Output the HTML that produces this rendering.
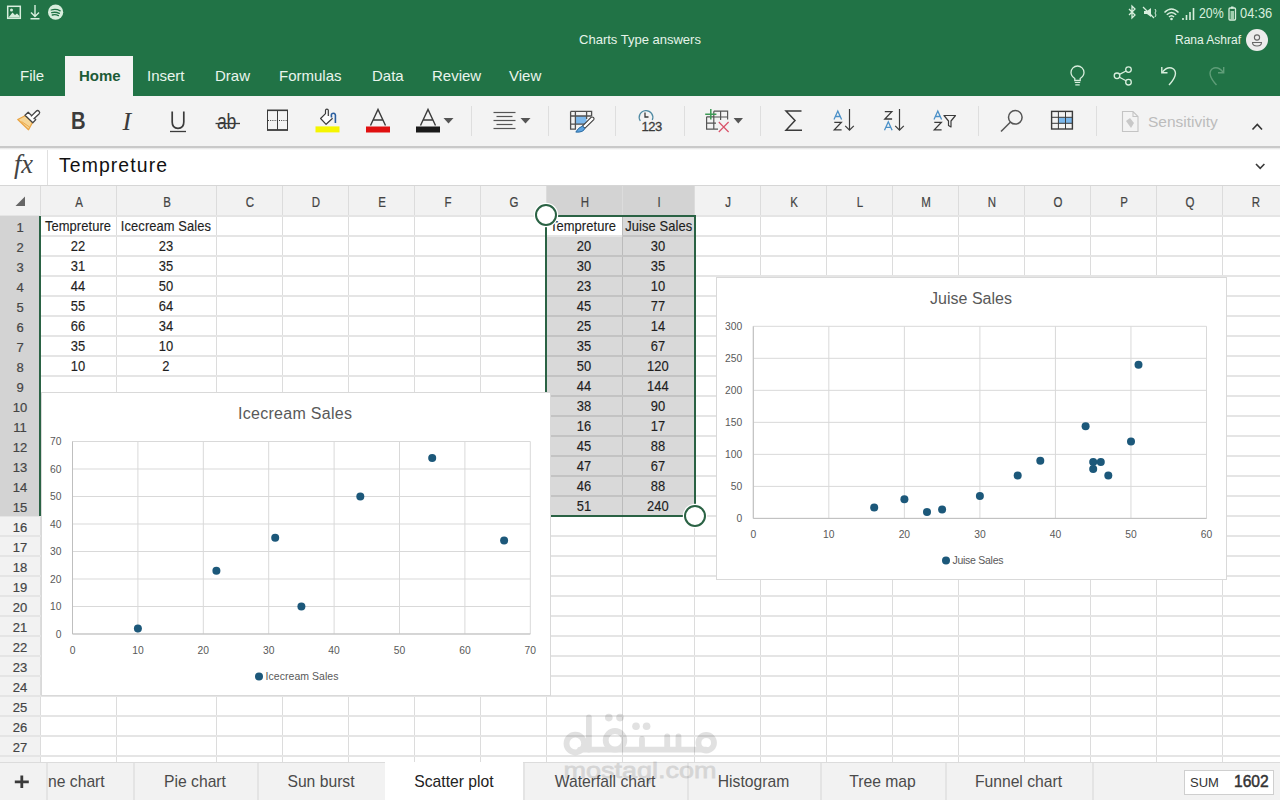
<!DOCTYPE html><html><head><meta charset="utf-8"><style>
*{margin:0;padding:0;box-sizing:border-box}
html,body{width:1280px;height:800px;overflow:hidden;background:#fff;font-family:"Liberation Sans", sans-serif}
.a{position:absolute}
.t{position:absolute;white-space:nowrap;line-height:1}
</style></head><body>
<div class="a" style="left:0;top:0;width:1280px;height:96px;background:#217346"></div>
<div class="t" style="left:0;width:1280px;text-align:center;top:33px;font-size:13px;color:#e6f4ea">Charts Type answers</div>
<div class="t" style="left:1175px;top:34px;font-size:12px;color:#e6f4ea">Rana Ashraf</div>
<div class="a" style="left:1246px;top:29px;width:22px;height:22px;border-radius:50%;background:#ececec"></div>
<svg class="a" style="left:1246px;top:29px" width="22" height="22" viewBox="0 0 22 22"><circle cx="11" cy="8.5" r="2.6" fill="none" stroke="#666" stroke-width="1.1"/><path d="M6.5 13.5 H15.5 Q15.5 17 11 17 Q6.5 17 6.5 13.5 Z" fill="none" stroke="#666" stroke-width="1.1"/></svg>
<svg class="a" style="left:0;top:0" width="70" height="24" viewBox="0 0 70 24"><rect x="7.7" y="6.3" width="12.6" height="12" fill="none" stroke="#d8eedd" stroke-width="1.5"/><path d="M8.5 17.5 L12.5 12.5 L15 15 L17 13.5 L19.5 16 V17.5 Z" fill="#d8eedd"/><circle cx="11.5" cy="10" r="1.5" fill="#d8eedd"/><path d="M35 5 V16.5 M31 12.5 L35 16.5 L39 12.5 M30.5 18.8 H39.5" fill="none" stroke="#d8eedd" stroke-width="1.4"/><circle cx="55.6" cy="12.2" r="7.6" fill="#d8eedd"/><path d="M51.2 10 Q56 8.6 60.2 10.8 M51.7 12.6 Q55.7 11.6 59.3 13.4 M52.3 15 Q55.7 14.2 58.4 15.6" fill="none" stroke="#217346" stroke-width="1.3" stroke-linecap="round"/></svg>
<div class="t" style="left:1199px;top:6px;font-size:14px;color:#d8eedd;transform:scaleX(0.88);transform-origin:0 0">20%</div>
<div class="t" style="left:1240px;top:6px;font-size:14px;color:#d8eedd;transform:scaleX(0.92);transform-origin:0 0">04:36</div>
<svg class="a" style="left:1125px;top:4px" width="112" height="18" viewBox="0 0 112 18"><path d="M4 5 L10 11 L7 14 V2 L10 5 L4 11" fill="none" stroke="#d8eedd" stroke-width="1.3"/><path d="M19 7 H22 L26 4 V13 L22 10 H19 Z" fill="#d8eedd"/><path d="M18 3 L29 14" stroke="#d8eedd" stroke-width="1.3"/><path d="M30 5 L31 7 L30 9 L31 11 L30 13" fill="none" stroke="#d8eedd" stroke-width="1"/><path d="M39.5 8.5 Q46.5 1.5 53.5 8.5 M41.8 10.8 Q46.5 6 51.2 10.8 M44 13 Q46.5 10.5 49 13" fill="none" stroke="#d8eedd" stroke-width="1.5"/><circle cx="46.5" cy="15" r="1.3" fill="#d8eedd"/><path d="M58 14 V16 M61.5 11 V16 M65 8 V16 M68.5 4 V16" stroke="#d8eedd" stroke-width="1.6"/><rect x="104" y="4" width="6.5" height="12" rx="1" fill="none" stroke="#d8eedd" stroke-width="1.3"/><rect x="106" y="2.5" width="2.5" height="2" fill="#d8eedd"/><rect x="105.5" y="7" width="3.5" height="8" fill="#9fcfae"/></svg>
<div class="a" style="left:65px;top:56px;width:68px;height:41px;background:#f3f3f3"></div>
<div class="t" style="left:20px;top:68px;font-size:15px;color:#eaf5ed">File</div>
<div class="t" style="left:79px;top:68px;font-size:15px;color:#1d5b37;font-weight:bold">Home</div>
<div class="t" style="left:147px;top:68px;font-size:15px;color:#eaf5ed">Insert</div>
<div class="t" style="left:215px;top:68px;font-size:15px;color:#eaf5ed">Draw</div>
<div class="t" style="left:279px;top:68px;font-size:15px;color:#eaf5ed">Formulas</div>
<div class="t" style="left:372px;top:68px;font-size:15px;color:#eaf5ed">Data</div>
<div class="t" style="left:432px;top:68px;font-size:15px;color:#eaf5ed">Review</div>
<div class="t" style="left:509px;top:68px;font-size:15px;color:#eaf5ed">View</div>
<svg class="a" style="left:1060px;top:60px" width="180" height="32" viewBox="0 0 180 32"><path d="M14.8 20.5 V18.5 Q11 16 11 12.5 A6.5 6.5 0 0 1 24 12.5 Q24 16 20.2 18.5 V20.5 Z" fill="none" stroke="#d8eedd" stroke-width="1.3"/><path d="M14.8 22.5 H20.2 M15.3 24.8 H19.7" stroke="#d8eedd" stroke-width="1.2"/><circle cx="57" cy="15.8" r="2.8" fill="none" stroke="#d8eedd" stroke-width="1.3"/><circle cx="68.5" cy="9.6" r="2.8" fill="none" stroke="#d8eedd" stroke-width="1.3"/><circle cx="68.5" cy="22.2" r="2.8" fill="none" stroke="#d8eedd" stroke-width="1.3"/><path d="M59.5 14.4 L66 11 M59.5 17.2 L66 20.8" stroke="#d8eedd" stroke-width="1.3"/><path d="M102.5 12 Q108 5.5 113.5 9 Q119 14 109 25" fill="none" stroke="#d8eedd" stroke-width="1.4"/><path d="M101.8 7 V12.8 H107.5" fill="none" stroke="#d8eedd" stroke-width="1.4"/><path d="M163 12 Q157.5 5.5 152 9 Q146.5 14 156.5 25" fill="none" stroke="#5f9d78" stroke-width="1.4"/><path d="M163.7 7 V12.8 H158" fill="none" stroke="#5f9d78" stroke-width="1.4"/></svg>
<div class="a" style="left:0;top:96px;width:1280px;height:50px;background:#f3f3f3"></div>
<svg class="a" style="left:0;top:96px" width="1280" height="51" viewBox="0 96 1280 51"><path d="M17.8 119.5 L25.5 115.5 L32.5 122.5 L28.5 129.8 Z" fill="#f6d595" stroke="#eaa443" stroke-width="1.3" stroke-linejoin="round"/><path d="M21.5 121.5 L29.5 127" stroke="#eaa443" stroke-width="0.9"/><path d="M25 115.2 L28.2 112.2 L35.8 119.6 L32.8 122.8 Z" fill="#fff" stroke="#444" stroke-width="1.3" stroke-linejoin="round"/><path d="M31 116.4 L36.2 111.2 Q37.6 109.8 39 111.2 Q40.4 112.6 39 114 L33.6 119" fill="#fff" stroke="#444" stroke-width="1.3" stroke-linejoin="round"/><line x1="471.5" y1="106" x2="471.5" y2="136" stroke="#dedede" stroke-width="1"/><line x1="548.5" y1="106" x2="548.5" y2="136" stroke="#dedede" stroke-width="1"/><line x1="615.5" y1="106" x2="615.5" y2="136" stroke="#dedede" stroke-width="1"/><line x1="684.5" y1="106" x2="684.5" y2="136" stroke="#dedede" stroke-width="1"/><line x1="760.5" y1="106" x2="760.5" y2="136" stroke="#dedede" stroke-width="1"/><line x1="978.5" y1="106" x2="978.5" y2="136" stroke="#dedede" stroke-width="1"/><line x1="1096.5" y1="106" x2="1096.5" y2="136" stroke="#dedede" stroke-width="1"/><text x="71" y="129.5" transform="translate(71 0) scale(0.86 1) translate(-71 0)" font-size="23.5" font-weight="bold" fill="#3b3b3b" font-family="Liberation Sans">B</text><text x="122.5" y="129.5" font-size="26" font-style="italic" fill="#3b3b3b" font-family="Liberation Serif">I</text><path d="M172.2 111.5 V122 Q172.2 128.3 178 128.3 Q183.8 128.3 183.8 122 V111.5" fill="none" stroke="#3b3b3b" stroke-width="1.7"/><line x1="170" y1="131.5" x2="186" y2="131.5" stroke="#3b3b3b" stroke-width="1.3"/><text x="217" y="129" transform="translate(217 0) scale(0.8 1) translate(-217 0)" font-size="22" fill="#3b3b3b" font-family="Liberation Sans" letter-spacing="-0.3">ab</text><line x1="215.5" y1="123.5" x2="240" y2="123.5" stroke="#3b3b3b" stroke-width="1.3"/><rect x="267.5" y="110.5" width="20" height="19.5" fill="none" stroke="#3b3b3b" stroke-width="1"/><line x1="267" y1="110.3" x2="288" y2="110.3" stroke="#3b3b3b" stroke-width="1.6"/><line x1="267" y1="130" x2="288" y2="130" stroke="#3b3b3b" stroke-width="1.6"/><line x1="277.5" y1="110" x2="277.5" y2="130" stroke="#3b3b3b" stroke-width="1"/><line x1="268" y1="120.5" x2="287" y2="120.5" stroke="#3b3b3b" stroke-width="1" stroke-dasharray="1 1.2"/><path d="M328.3 116 V110.6 Q328.3 109.2 326.9 109.2 Q325.5 109.2 325.5 110.6 V113.6 L320.6 118.5 L326.1 124.3 L332.6 118.2" fill="#fff" stroke="#3b3b3b" stroke-width="1.2" stroke-linejoin="round"/><path d="M331.6 117.5 Q330.6 113.2 333.2 113.2 Q335.9 113.2 335.4 117 V123" fill="none" stroke="#2a5ea0" stroke-width="1.6"/><rect x="315.5" y="126.4" width="24" height="6" fill="#f5f500"/><path d="M370.5 125.5 L378 109.5 L385.5 125.5 M373 120 H383" fill="none" stroke="#3b3b3b" stroke-width="1.4"/><rect x="366" y="126.5" width="24" height="6" fill="#e01010"/><path d="M420.5 125.5 L428 109.5 L435.5 125.5 M423 120 H433" fill="none" stroke="#3b3b3b" stroke-width="1.4"/><rect x="416" y="126.5" width="24" height="6" fill="#1a1a1a"/><path d="M443.5 118 H453.5 L448.5 123.5 Z" fill="#555"/><line x1="493.5" y1="112.5" x2="515.5" y2="112.5" stroke="#555" stroke-width="1.2"/><line x1="496.5" y1="116.5" x2="512.5" y2="116.5" stroke="#555" stroke-width="1.2"/><line x1="493.5" y1="120.5" x2="515.5" y2="120.5" stroke="#555" stroke-width="1.2"/><line x1="496.5" y1="124.5" x2="512.5" y2="124.5" stroke="#555" stroke-width="1.2"/><line x1="493.5" y1="128.5" x2="515.5" y2="128.5" stroke="#555" stroke-width="1.2"/><path d="M520.5 118 H530.5 L525.5 123.5 Z" fill="#555"/><rect x="575.4" y="116" width="11.2" height="8.2" fill="#7cb8ec"/><path d="M570.6 111.4 H591.6 V116 M570.6 111.4 V129.2 H576 M570.6 116 H591.6 M575.4 111.4 V129.2 M586.6 111.4 V119 M570.6 124.2 H585" fill="none" stroke="#505050" stroke-width="1.3"/><path d="M591.3 117.2 Q592.6 116.6 593.6 117.6 Q594.4 118.6 593.8 119.6 L584.8 128.4 L582.4 126.1 Z" fill="#fff" stroke="#3d3d3d" stroke-width="1.1" stroke-linejoin="round"/><path d="M582.4 126.1 L584.8 128.4 Q583.5 132.6 575.8 132.1 Q578.2 127.6 582.4 126.1 Z" fill="#5da3e0" stroke="#2a6aa0" stroke-width="1"/><path d="M640.3 121 A6.8 6.8 0 1 1 652.3 120" fill="none" stroke="#4f8aa3" stroke-width="1.3"/><path d="M645 112.5 V117 H648.5" fill="none" stroke="#3b3b3b" stroke-width="1.3"/><text x="641.5" y="131.2" font-size="13" fill="#3b3b3b" stroke="#3b3b3b" stroke-width="0.3" font-family="Liberation Sans" letter-spacing="-0.5">123</text><path d="M713.8 111.2 H727.6 V119.6 M720.6 111.2 V120 M713.8 117 H727 M706.6 116.8 V129.2 H718 M713.8 111.2 V129.2 M706.6 123.2 H716 M706.6 116.9 H713.8" fill="none" stroke="#555" stroke-width="1.2"/><path d="M705.2 114.2 H716.4 M710.8 109 V119.6" stroke="#3c9a55" stroke-width="1.5"/><path d="M718.8 122 L728.6 132 M728.6 122 L718.8 132" stroke="#d9536a" stroke-width="1.2"/><path d="M733.6 118 H743 L738.3 123.5 Z" fill="#555"/><path d="M801.5 111 H786 L795 120.5 L786 130.2 H802" fill="none" stroke="#3b3b3b" stroke-width="1.5" stroke-linejoin="miter"/><path d="M834 119.5 L837.8 111 L841.6 119.5 M835.4 116.5 H840.2" fill="none" stroke="#4a90c8" stroke-width="1.3"/><path d="M834.3 122.39999999999999 H841.3 L834.3 129.8 H841.6" fill="none" stroke="#3b3b3b" stroke-width="1.3"/><path d="M849.5 109 V130 M845.2 125.8 L849.5 130.2 L853.8 125.8" fill="none" stroke="#3b3b3b" stroke-width="1.2"/><path d="M884.8 111.6 H891.8 L884.8 119 H892.1" fill="none" stroke="#3b3b3b" stroke-width="1.3"/><path d="M884.5 130.3 L888.3 121.8 L892.1 130.3 M885.9 127.3 H890.7" fill="none" stroke="#4a90c8" stroke-width="1.3"/><path d="M899.5 109 V130 M895.2 125.8 L899.5 130.2 L903.8 125.8" fill="none" stroke="#3b3b3b" stroke-width="1.2"/><path d="M934 119.5 L937.8 111 L941.6 119.5 M935.4 116.5 H940.2" fill="none" stroke="#4a90c8" stroke-width="1.3"/><path d="M934.3 122.39999999999999 H941.3 L934.3 129.8 H941.6" fill="none" stroke="#3b3b3b" stroke-width="1.3"/><path d="M944 115.5 H955.5 L951 121 V127 L948.5 125.5 V121 Z" fill="none" stroke="#3b3b3b" stroke-width="1.2" stroke-linejoin="round"/><circle cx="1015.3" cy="117.3" r="6.8" fill="none" stroke="#555" stroke-width="1.5"/><line x1="1010.3" y1="122.3" x2="1001" y2="131.5" stroke="#555" stroke-width="1.5"/><rect x="1058.4" y="117.3" width="13.6" height="6" fill="#7cb8ec"/><rect x="1051.6" y="111.4" width="20.8" height="17.6" fill="none" stroke="#3b3b3b" stroke-width="1.4"/><path d="M1058.4 111.4 V129 M1065.5 111.4 V129 M1051.6 117.3 H1072.4 M1051.6 123.3 H1072.4" fill="none" stroke="#3b3b3b" stroke-width="1"/><path d="M1122.5 111.5 H1133 L1138 116.5 V131.5 H1122.5 Z M1133 111.5 V116.5 H1138" fill="none" stroke="#c4c4c4" stroke-width="1.1"/><path d="M1126 121 L1130 118 L1134 123 L1131 128 Z" fill="#c8c8c8"/><text x="1148" y="127" font-size="15.5" fill="#bcbcbc" font-family="Liberation Sans">Sensitivity</text><path d="M1252.5 129.5 L1257.3 124.5 L1262 129.5" fill="none" stroke="#333" stroke-width="1.6"/></svg>
<div class="a" style="left:0;top:148px;width:1280px;height:38px;background:#fff;border-bottom:1px solid #d6d6d6"></div>
<div class="a" style="left:47px;top:148px;width:1px;height:37px;background:#e0e0e0"></div>
<div class="a" style="left:0;top:146px;width:1280px;height:2px;background:#c9c9c9"></div>
<div class="a" style="left:0;top:148px;width:1280px;height:2px;background:linear-gradient(#e2e2e2,#fff)"></div>
<div class="t" style="left:14px;top:151px;font-size:26.5px;font-family:'Liberation Serif',serif;font-style:italic;color:#444">fx</div>
<div class="t" style="left:59px;top:156px;font-size:19.4px;letter-spacing:1.1px;color:#111">Tempreture</div>
<svg class="a" style="left:1252px;top:160px" width="14" height="12" viewBox="0 0 14 12"><path d="M4 4 L8.2 8.3 L12.4 4" fill="none" stroke="#3a3a3a" stroke-width="1.6"/></svg>
<div class="a" style="left:0;top:186px;width:1280px;height:30px;background:#f2f2f2"></div>
<div class="a" style="left:546px;top:186px;width:149px;height:30px;background:#d3d3d3"></div>
<svg class="a" style="left:13px;top:194px" width="14" height="14" viewBox="0 0 14 14"><path d="M2.5 12 L12 2.5 V12 Z" fill="#666"/></svg>
<div class="a" style="left:0;top:216px;width:40px;height:546px;background:#f2f2f2"></div>
<svg class="a" style="left:0;top:186px" width="1280" height="576" viewBox="0 186 1280 576" shape-rendering="crispEdges"><rect x="40" y="186" width="1" height="576" fill="#dcdcdc"/><rect x="116" y="186" width="1" height="576" fill="#dcdcdc"/><rect x="216" y="186" width="1" height="576" fill="#dcdcdc"/><rect x="282" y="186" width="1" height="576" fill="#dcdcdc"/><rect x="348" y="186" width="1" height="576" fill="#dcdcdc"/><rect x="414" y="186" width="1" height="576" fill="#dcdcdc"/><rect x="480" y="186" width="1" height="576" fill="#dcdcdc"/><rect x="546" y="186" width="1" height="576" fill="#dcdcdc"/><rect x="622" y="186" width="1" height="576" fill="#dcdcdc"/><rect x="694" y="186" width="1" height="576" fill="#dcdcdc"/><rect x="760" y="186" width="1" height="576" fill="#dcdcdc"/><rect x="826" y="186" width="1" height="576" fill="#dcdcdc"/><rect x="892" y="186" width="1" height="576" fill="#dcdcdc"/><rect x="958" y="186" width="1" height="576" fill="#dcdcdc"/><rect x="1024" y="186" width="1" height="576" fill="#dcdcdc"/><rect x="1090" y="186" width="1" height="576" fill="#dcdcdc"/><rect x="1156" y="186" width="1" height="576" fill="#dcdcdc"/><rect x="1222" y="186" width="1" height="576" fill="#dcdcdc"/><rect x="1288" y="186" width="1" height="576" fill="#dcdcdc"/><rect x="0" y="215" width="1280" height="2" fill="#e5e5e5"/><rect x="0" y="235" width="1280" height="2" fill="#e5e5e5"/><rect x="0" y="255" width="1280" height="2" fill="#e5e5e5"/><rect x="0" y="275" width="1280" height="2" fill="#e5e5e5"/><rect x="0" y="295" width="1280" height="2" fill="#e5e5e5"/><rect x="0" y="315" width="1280" height="2" fill="#e5e5e5"/><rect x="0" y="335" width="1280" height="2" fill="#e5e5e5"/><rect x="0" y="355" width="1280" height="2" fill="#e5e5e5"/><rect x="0" y="375" width="1280" height="2" fill="#e5e5e5"/><rect x="0" y="395" width="1280" height="2" fill="#e5e5e5"/><rect x="0" y="415" width="1280" height="2" fill="#e5e5e5"/><rect x="0" y="435" width="1280" height="2" fill="#e5e5e5"/><rect x="0" y="455" width="1280" height="2" fill="#e5e5e5"/><rect x="0" y="475" width="1280" height="2" fill="#e5e5e5"/><rect x="0" y="495" width="1280" height="2" fill="#e5e5e5"/><rect x="0" y="515" width="1280" height="2" fill="#e5e5e5"/><rect x="0" y="535" width="1280" height="2" fill="#e5e5e5"/><rect x="0" y="555" width="1280" height="2" fill="#e5e5e5"/><rect x="0" y="575" width="1280" height="2" fill="#e5e5e5"/><rect x="0" y="595" width="1280" height="2" fill="#e5e5e5"/><rect x="0" y="615" width="1280" height="2" fill="#e5e5e5"/><rect x="0" y="635" width="1280" height="2" fill="#e5e5e5"/><rect x="0" y="655" width="1280" height="2" fill="#e5e5e5"/><rect x="0" y="675" width="1280" height="2" fill="#e5e5e5"/><rect x="0" y="695" width="1280" height="2" fill="#e5e5e5"/><rect x="0" y="715" width="1280" height="2" fill="#e5e5e5"/><rect x="0" y="735" width="1280" height="2" fill="#e5e5e5"/><rect x="0" y="755" width="1280" height="2" fill="#e5e5e5"/><rect x="0" y="775" width="1280" height="2" fill="#e5e5e5"/><rect x="546" y="237" width="149" height="279" fill="#000" fill-opacity="0.15"/><rect x="622" y="216" width="73" height="21" fill="#000" fill-opacity="0.15"/><rect x="0" y="216" width="39" height="300" fill="#d3d3d3"/></svg>
<div class="t" style="left:58.5px;width:40px;text-align:center;top:195px;font-size:14px;color:#444;-webkit-text-stroke:0.2px #444;transform:scaleX(0.82)">A</div>
<div class="t" style="left:146.5px;width:40px;text-align:center;top:195px;font-size:14px;color:#444;-webkit-text-stroke:0.2px #444;transform:scaleX(0.82)">B</div>
<div class="t" style="left:229.5px;width:40px;text-align:center;top:195px;font-size:14px;color:#444;-webkit-text-stroke:0.2px #444;transform:scaleX(0.82)">C</div>
<div class="t" style="left:295.5px;width:40px;text-align:center;top:195px;font-size:14px;color:#444;-webkit-text-stroke:0.2px #444;transform:scaleX(0.82)">D</div>
<div class="t" style="left:361.5px;width:40px;text-align:center;top:195px;font-size:14px;color:#444;-webkit-text-stroke:0.2px #444;transform:scaleX(0.82)">E</div>
<div class="t" style="left:427.5px;width:40px;text-align:center;top:195px;font-size:14px;color:#444;-webkit-text-stroke:0.2px #444;transform:scaleX(0.82)">F</div>
<div class="t" style="left:493.5px;width:40px;text-align:center;top:195px;font-size:14px;color:#444;-webkit-text-stroke:0.2px #444;transform:scaleX(0.82)">G</div>
<div class="t" style="left:564.5px;width:40px;text-align:center;top:195px;font-size:14px;color:#444;-webkit-text-stroke:0.2px #444;transform:scaleX(0.82)">H</div>
<div class="t" style="left:638.5px;width:40px;text-align:center;top:195px;font-size:14px;color:#444;-webkit-text-stroke:0.2px #444;transform:scaleX(0.82)">I</div>
<div class="t" style="left:707.5px;width:40px;text-align:center;top:195px;font-size:14px;color:#444;-webkit-text-stroke:0.2px #444;transform:scaleX(0.82)">J</div>
<div class="t" style="left:773.5px;width:40px;text-align:center;top:195px;font-size:14px;color:#444;-webkit-text-stroke:0.2px #444;transform:scaleX(0.82)">K</div>
<div class="t" style="left:839.5px;width:40px;text-align:center;top:195px;font-size:14px;color:#444;-webkit-text-stroke:0.2px #444;transform:scaleX(0.82)">L</div>
<div class="t" style="left:905.5px;width:40px;text-align:center;top:195px;font-size:14px;color:#444;-webkit-text-stroke:0.2px #444;transform:scaleX(0.82)">M</div>
<div class="t" style="left:971.5px;width:40px;text-align:center;top:195px;font-size:14px;color:#444;-webkit-text-stroke:0.2px #444;transform:scaleX(0.82)">N</div>
<div class="t" style="left:1037.5px;width:40px;text-align:center;top:195px;font-size:14px;color:#444;-webkit-text-stroke:0.2px #444;transform:scaleX(0.82)">O</div>
<div class="t" style="left:1103.5px;width:40px;text-align:center;top:195px;font-size:14px;color:#444;-webkit-text-stroke:0.2px #444;transform:scaleX(0.82)">P</div>
<div class="t" style="left:1169.5px;width:40px;text-align:center;top:195px;font-size:14px;color:#444;-webkit-text-stroke:0.2px #444;transform:scaleX(0.82)">Q</div>
<div class="t" style="left:1235.5px;width:40px;text-align:center;top:195px;font-size:14px;color:#444;-webkit-text-stroke:0.2px #444;transform:scaleX(0.82)">R</div>
<div class="t" style="left:0;width:40px;text-align:center;top:221px;font-size:13px;color:#444;-webkit-text-stroke:0.2px #444">1</div>
<div class="t" style="left:0;width:40px;text-align:center;top:241px;font-size:13px;color:#444;-webkit-text-stroke:0.2px #444">2</div>
<div class="t" style="left:0;width:40px;text-align:center;top:261px;font-size:13px;color:#444;-webkit-text-stroke:0.2px #444">3</div>
<div class="t" style="left:0;width:40px;text-align:center;top:281px;font-size:13px;color:#444;-webkit-text-stroke:0.2px #444">4</div>
<div class="t" style="left:0;width:40px;text-align:center;top:301px;font-size:13px;color:#444;-webkit-text-stroke:0.2px #444">5</div>
<div class="t" style="left:0;width:40px;text-align:center;top:321px;font-size:13px;color:#444;-webkit-text-stroke:0.2px #444">6</div>
<div class="t" style="left:0;width:40px;text-align:center;top:341px;font-size:13px;color:#444;-webkit-text-stroke:0.2px #444">7</div>
<div class="t" style="left:0;width:40px;text-align:center;top:361px;font-size:13px;color:#444;-webkit-text-stroke:0.2px #444">8</div>
<div class="t" style="left:0;width:40px;text-align:center;top:381px;font-size:13px;color:#444;-webkit-text-stroke:0.2px #444">9</div>
<div class="t" style="left:0;width:40px;text-align:center;top:401px;font-size:13px;color:#444;-webkit-text-stroke:0.2px #444">10</div>
<div class="t" style="left:0;width:40px;text-align:center;top:421px;font-size:13px;color:#444;-webkit-text-stroke:0.2px #444">11</div>
<div class="t" style="left:0;width:40px;text-align:center;top:441px;font-size:13px;color:#444;-webkit-text-stroke:0.2px #444">12</div>
<div class="t" style="left:0;width:40px;text-align:center;top:461px;font-size:13px;color:#444;-webkit-text-stroke:0.2px #444">13</div>
<div class="t" style="left:0;width:40px;text-align:center;top:481px;font-size:13px;color:#444;-webkit-text-stroke:0.2px #444">14</div>
<div class="t" style="left:0;width:40px;text-align:center;top:501px;font-size:13px;color:#444;-webkit-text-stroke:0.2px #444">15</div>
<div class="t" style="left:0;width:40px;text-align:center;top:521px;font-size:13px;color:#444;-webkit-text-stroke:0.2px #444">16</div>
<div class="t" style="left:0;width:40px;text-align:center;top:541px;font-size:13px;color:#444;-webkit-text-stroke:0.2px #444">17</div>
<div class="t" style="left:0;width:40px;text-align:center;top:561px;font-size:13px;color:#444;-webkit-text-stroke:0.2px #444">18</div>
<div class="t" style="left:0;width:40px;text-align:center;top:581px;font-size:13px;color:#444;-webkit-text-stroke:0.2px #444">19</div>
<div class="t" style="left:0;width:40px;text-align:center;top:601px;font-size:13px;color:#444;-webkit-text-stroke:0.2px #444">20</div>
<div class="t" style="left:0;width:40px;text-align:center;top:621px;font-size:13px;color:#444;-webkit-text-stroke:0.2px #444">21</div>
<div class="t" style="left:0;width:40px;text-align:center;top:641px;font-size:13px;color:#444;-webkit-text-stroke:0.2px #444">22</div>
<div class="t" style="left:0;width:40px;text-align:center;top:661px;font-size:13px;color:#444;-webkit-text-stroke:0.2px #444">23</div>
<div class="t" style="left:0;width:40px;text-align:center;top:681px;font-size:13px;color:#444;-webkit-text-stroke:0.2px #444">24</div>
<div class="t" style="left:0;width:40px;text-align:center;top:701px;font-size:13px;color:#444;-webkit-text-stroke:0.2px #444">25</div>
<div class="t" style="left:0;width:40px;text-align:center;top:721px;font-size:13px;color:#444;-webkit-text-stroke:0.2px #444">26</div>
<div class="t" style="left:0;width:40px;text-align:center;top:741px;font-size:13px;color:#444;-webkit-text-stroke:0.2px #444">27</div>
<div class="t" style="left:0;width:40px;text-align:center;top:761px;font-size:13px;color:#444;-webkit-text-stroke:0.2px #444">28</div>
<div class="t" style="left:40px;width:76px;text-align:center;top:219px;font-size:14.2px;letter-spacing:0.1px;color:#1e1e1e;-webkit-text-stroke:0.15px #1e1e1e;transform:scaleX(0.91)">Tempreture</div>
<div class="t" style="left:116px;width:100px;text-align:center;top:219px;font-size:14.2px;letter-spacing:0.1px;color:#1e1e1e;-webkit-text-stroke:0.15px #1e1e1e;transform:scaleX(0.91)">Icecream Sales</div>
<div class="t" style="left:40px;width:76px;text-align:center;top:239px;font-size:14.2px;letter-spacing:0.1px;color:#1e1e1e;-webkit-text-stroke:0.15px #1e1e1e;transform:scaleX(0.91)">22</div>
<div class="t" style="left:116px;width:100px;text-align:center;top:239px;font-size:14.2px;letter-spacing:0.1px;color:#1e1e1e;-webkit-text-stroke:0.15px #1e1e1e;transform:scaleX(0.91)">23</div>
<div class="t" style="left:40px;width:76px;text-align:center;top:259px;font-size:14.2px;letter-spacing:0.1px;color:#1e1e1e;-webkit-text-stroke:0.15px #1e1e1e;transform:scaleX(0.91)">31</div>
<div class="t" style="left:116px;width:100px;text-align:center;top:259px;font-size:14.2px;letter-spacing:0.1px;color:#1e1e1e;-webkit-text-stroke:0.15px #1e1e1e;transform:scaleX(0.91)">35</div>
<div class="t" style="left:40px;width:76px;text-align:center;top:279px;font-size:14.2px;letter-spacing:0.1px;color:#1e1e1e;-webkit-text-stroke:0.15px #1e1e1e;transform:scaleX(0.91)">44</div>
<div class="t" style="left:116px;width:100px;text-align:center;top:279px;font-size:14.2px;letter-spacing:0.1px;color:#1e1e1e;-webkit-text-stroke:0.15px #1e1e1e;transform:scaleX(0.91)">50</div>
<div class="t" style="left:40px;width:76px;text-align:center;top:299px;font-size:14.2px;letter-spacing:0.1px;color:#1e1e1e;-webkit-text-stroke:0.15px #1e1e1e;transform:scaleX(0.91)">55</div>
<div class="t" style="left:116px;width:100px;text-align:center;top:299px;font-size:14.2px;letter-spacing:0.1px;color:#1e1e1e;-webkit-text-stroke:0.15px #1e1e1e;transform:scaleX(0.91)">64</div>
<div class="t" style="left:40px;width:76px;text-align:center;top:319px;font-size:14.2px;letter-spacing:0.1px;color:#1e1e1e;-webkit-text-stroke:0.15px #1e1e1e;transform:scaleX(0.91)">66</div>
<div class="t" style="left:116px;width:100px;text-align:center;top:319px;font-size:14.2px;letter-spacing:0.1px;color:#1e1e1e;-webkit-text-stroke:0.15px #1e1e1e;transform:scaleX(0.91)">34</div>
<div class="t" style="left:40px;width:76px;text-align:center;top:339px;font-size:14.2px;letter-spacing:0.1px;color:#1e1e1e;-webkit-text-stroke:0.15px #1e1e1e;transform:scaleX(0.91)">35</div>
<div class="t" style="left:116px;width:100px;text-align:center;top:339px;font-size:14.2px;letter-spacing:0.1px;color:#1e1e1e;-webkit-text-stroke:0.15px #1e1e1e;transform:scaleX(0.91)">10</div>
<div class="t" style="left:40px;width:76px;text-align:center;top:359px;font-size:14.2px;letter-spacing:0.1px;color:#1e1e1e;-webkit-text-stroke:0.15px #1e1e1e;transform:scaleX(0.91)">10</div>
<div class="t" style="left:116px;width:100px;text-align:center;top:359px;font-size:14.2px;letter-spacing:0.1px;color:#1e1e1e;-webkit-text-stroke:0.15px #1e1e1e;transform:scaleX(0.91)">2</div>
<div class="t" style="left:545px;width:76px;text-align:center;top:219px;font-size:14.2px;letter-spacing:0.1px;color:#1e1e1e;-webkit-text-stroke:0.15px #1e1e1e;transform:scaleX(0.91)">Tempreture</div>
<div class="t" style="left:622px;width:72px;text-align:center;top:219px;font-size:14.2px;letter-spacing:0.1px;color:#1e1e1e;-webkit-text-stroke:0.15px #1e1e1e;transform:scaleX(0.91)">Juise Sales</div>
<div class="t" style="left:546px;width:76px;text-align:center;top:239px;font-size:14.2px;letter-spacing:0.1px;color:#1e1e1e;-webkit-text-stroke:0.15px #1e1e1e;transform:scaleX(0.91)">20</div>
<div class="t" style="left:622px;width:72px;text-align:center;top:239px;font-size:14.2px;letter-spacing:0.1px;color:#1e1e1e;-webkit-text-stroke:0.15px #1e1e1e;transform:scaleX(0.91)">30</div>
<div class="t" style="left:546px;width:76px;text-align:center;top:259px;font-size:14.2px;letter-spacing:0.1px;color:#1e1e1e;-webkit-text-stroke:0.15px #1e1e1e;transform:scaleX(0.91)">30</div>
<div class="t" style="left:622px;width:72px;text-align:center;top:259px;font-size:14.2px;letter-spacing:0.1px;color:#1e1e1e;-webkit-text-stroke:0.15px #1e1e1e;transform:scaleX(0.91)">35</div>
<div class="t" style="left:546px;width:76px;text-align:center;top:279px;font-size:14.2px;letter-spacing:0.1px;color:#1e1e1e;-webkit-text-stroke:0.15px #1e1e1e;transform:scaleX(0.91)">23</div>
<div class="t" style="left:622px;width:72px;text-align:center;top:279px;font-size:14.2px;letter-spacing:0.1px;color:#1e1e1e;-webkit-text-stroke:0.15px #1e1e1e;transform:scaleX(0.91)">10</div>
<div class="t" style="left:546px;width:76px;text-align:center;top:299px;font-size:14.2px;letter-spacing:0.1px;color:#1e1e1e;-webkit-text-stroke:0.15px #1e1e1e;transform:scaleX(0.91)">45</div>
<div class="t" style="left:622px;width:72px;text-align:center;top:299px;font-size:14.2px;letter-spacing:0.1px;color:#1e1e1e;-webkit-text-stroke:0.15px #1e1e1e;transform:scaleX(0.91)">77</div>
<div class="t" style="left:546px;width:76px;text-align:center;top:319px;font-size:14.2px;letter-spacing:0.1px;color:#1e1e1e;-webkit-text-stroke:0.15px #1e1e1e;transform:scaleX(0.91)">25</div>
<div class="t" style="left:622px;width:72px;text-align:center;top:319px;font-size:14.2px;letter-spacing:0.1px;color:#1e1e1e;-webkit-text-stroke:0.15px #1e1e1e;transform:scaleX(0.91)">14</div>
<div class="t" style="left:546px;width:76px;text-align:center;top:339px;font-size:14.2px;letter-spacing:0.1px;color:#1e1e1e;-webkit-text-stroke:0.15px #1e1e1e;transform:scaleX(0.91)">35</div>
<div class="t" style="left:622px;width:72px;text-align:center;top:339px;font-size:14.2px;letter-spacing:0.1px;color:#1e1e1e;-webkit-text-stroke:0.15px #1e1e1e;transform:scaleX(0.91)">67</div>
<div class="t" style="left:546px;width:76px;text-align:center;top:359px;font-size:14.2px;letter-spacing:0.1px;color:#1e1e1e;-webkit-text-stroke:0.15px #1e1e1e;transform:scaleX(0.91)">50</div>
<div class="t" style="left:622px;width:72px;text-align:center;top:359px;font-size:14.2px;letter-spacing:0.1px;color:#1e1e1e;-webkit-text-stroke:0.15px #1e1e1e;transform:scaleX(0.91)">120</div>
<div class="t" style="left:546px;width:76px;text-align:center;top:379px;font-size:14.2px;letter-spacing:0.1px;color:#1e1e1e;-webkit-text-stroke:0.15px #1e1e1e;transform:scaleX(0.91)">44</div>
<div class="t" style="left:622px;width:72px;text-align:center;top:379px;font-size:14.2px;letter-spacing:0.1px;color:#1e1e1e;-webkit-text-stroke:0.15px #1e1e1e;transform:scaleX(0.91)">144</div>
<div class="t" style="left:546px;width:76px;text-align:center;top:399px;font-size:14.2px;letter-spacing:0.1px;color:#1e1e1e;-webkit-text-stroke:0.15px #1e1e1e;transform:scaleX(0.91)">38</div>
<div class="t" style="left:622px;width:72px;text-align:center;top:399px;font-size:14.2px;letter-spacing:0.1px;color:#1e1e1e;-webkit-text-stroke:0.15px #1e1e1e;transform:scaleX(0.91)">90</div>
<div class="t" style="left:546px;width:76px;text-align:center;top:419px;font-size:14.2px;letter-spacing:0.1px;color:#1e1e1e;-webkit-text-stroke:0.15px #1e1e1e;transform:scaleX(0.91)">16</div>
<div class="t" style="left:622px;width:72px;text-align:center;top:419px;font-size:14.2px;letter-spacing:0.1px;color:#1e1e1e;-webkit-text-stroke:0.15px #1e1e1e;transform:scaleX(0.91)">17</div>
<div class="t" style="left:546px;width:76px;text-align:center;top:439px;font-size:14.2px;letter-spacing:0.1px;color:#1e1e1e;-webkit-text-stroke:0.15px #1e1e1e;transform:scaleX(0.91)">45</div>
<div class="t" style="left:622px;width:72px;text-align:center;top:439px;font-size:14.2px;letter-spacing:0.1px;color:#1e1e1e;-webkit-text-stroke:0.15px #1e1e1e;transform:scaleX(0.91)">88</div>
<div class="t" style="left:546px;width:76px;text-align:center;top:459px;font-size:14.2px;letter-spacing:0.1px;color:#1e1e1e;-webkit-text-stroke:0.15px #1e1e1e;transform:scaleX(0.91)">47</div>
<div class="t" style="left:622px;width:72px;text-align:center;top:459px;font-size:14.2px;letter-spacing:0.1px;color:#1e1e1e;-webkit-text-stroke:0.15px #1e1e1e;transform:scaleX(0.91)">67</div>
<div class="t" style="left:546px;width:76px;text-align:center;top:479px;font-size:14.2px;letter-spacing:0.1px;color:#1e1e1e;-webkit-text-stroke:0.15px #1e1e1e;transform:scaleX(0.91)">46</div>
<div class="t" style="left:622px;width:72px;text-align:center;top:479px;font-size:14.2px;letter-spacing:0.1px;color:#1e1e1e;-webkit-text-stroke:0.15px #1e1e1e;transform:scaleX(0.91)">88</div>
<div class="t" style="left:546px;width:76px;text-align:center;top:499px;font-size:14.2px;letter-spacing:0.1px;color:#1e1e1e;-webkit-text-stroke:0.15px #1e1e1e;transform:scaleX(0.91)">51</div>
<div class="t" style="left:622px;width:72px;text-align:center;top:499px;font-size:14.2px;letter-spacing:0.1px;color:#1e1e1e;-webkit-text-stroke:0.15px #1e1e1e;transform:scaleX(0.91)">240</div>
<div class="a" style="left:545px;top:215px;width:151px;height:302px;border:2px solid #2a6244"></div>
<div class="a" style="left:39px;top:216px;width:2px;height:300px;background:#2a6244"></div>
<svg class="a" style="left:41px;top:392px" width="510" height="304" viewBox="41 392 510 304"><rect x="41.5" y="392.5" width="509" height="303" fill="#fff" stroke="#d9d9d9"/><line x1="72.5" y1="441.5" x2="72.5" y2="634" stroke="#d9d9d9" stroke-width="1"/><text x="72.5" y="654" font-size="10.3" fill="#595959" text-anchor="middle" font-family="Liberation Sans">0</text><line x1="137.89999999999998" y1="441.5" x2="137.89999999999998" y2="634" stroke="#d9d9d9" stroke-width="1"/><text x="137.89999999999998" y="654" font-size="10.3" fill="#595959" text-anchor="middle" font-family="Liberation Sans">10</text><line x1="203.29999999999998" y1="441.5" x2="203.29999999999998" y2="634" stroke="#d9d9d9" stroke-width="1"/><text x="203.29999999999998" y="654" font-size="10.3" fill="#595959" text-anchor="middle" font-family="Liberation Sans">20</text><line x1="268.7" y1="441.5" x2="268.7" y2="634" stroke="#d9d9d9" stroke-width="1"/><text x="268.7" y="654" font-size="10.3" fill="#595959" text-anchor="middle" font-family="Liberation Sans">30</text><line x1="334.09999999999997" y1="441.5" x2="334.09999999999997" y2="634" stroke="#d9d9d9" stroke-width="1"/><text x="334.09999999999997" y="654" font-size="10.3" fill="#595959" text-anchor="middle" font-family="Liberation Sans">40</text><line x1="399.5" y1="441.5" x2="399.5" y2="634" stroke="#d9d9d9" stroke-width="1"/><text x="399.5" y="654" font-size="10.3" fill="#595959" text-anchor="middle" font-family="Liberation Sans">50</text><line x1="464.9" y1="441.5" x2="464.9" y2="634" stroke="#d9d9d9" stroke-width="1"/><text x="464.9" y="654" font-size="10.3" fill="#595959" text-anchor="middle" font-family="Liberation Sans">60</text><line x1="530.3" y1="441.5" x2="530.3" y2="634" stroke="#d9d9d9" stroke-width="1"/><text x="530.3" y="654" font-size="10.3" fill="#595959" text-anchor="middle" font-family="Liberation Sans">70</text><line x1="72.5" y1="634.0" x2="530.3" y2="634.0" stroke="#d9d9d9" stroke-width="1"/><text x="61.5" y="637.7" font-size="10.3" fill="#595959" text-anchor="end" font-family="Liberation Sans">0</text><line x1="72.5" y1="606.5" x2="530.3" y2="606.5" stroke="#d9d9d9" stroke-width="1"/><text x="61.5" y="610.2" font-size="10.3" fill="#595959" text-anchor="end" font-family="Liberation Sans">10</text><line x1="72.5" y1="579.0" x2="530.3" y2="579.0" stroke="#d9d9d9" stroke-width="1"/><text x="61.5" y="582.7" font-size="10.3" fill="#595959" text-anchor="end" font-family="Liberation Sans">20</text><line x1="72.5" y1="551.5" x2="530.3" y2="551.5" stroke="#d9d9d9" stroke-width="1"/><text x="61.5" y="555.2" font-size="10.3" fill="#595959" text-anchor="end" font-family="Liberation Sans">30</text><line x1="72.5" y1="524.0" x2="530.3" y2="524.0" stroke="#d9d9d9" stroke-width="1"/><text x="61.5" y="527.7" font-size="10.3" fill="#595959" text-anchor="end" font-family="Liberation Sans">40</text><line x1="72.5" y1="496.5" x2="530.3" y2="496.5" stroke="#d9d9d9" stroke-width="1"/><text x="61.5" y="500.2" font-size="10.3" fill="#595959" text-anchor="end" font-family="Liberation Sans">50</text><line x1="72.5" y1="469.0" x2="530.3" y2="469.0" stroke="#d9d9d9" stroke-width="1"/><text x="61.5" y="472.7" font-size="10.3" fill="#595959" text-anchor="end" font-family="Liberation Sans">60</text><line x1="72.5" y1="441.5" x2="530.3" y2="441.5" stroke="#d9d9d9" stroke-width="1"/><text x="61.5" y="445.2" font-size="10.3" fill="#595959" text-anchor="end" font-family="Liberation Sans">70</text><line x1="72.5" y1="634" x2="530.3" y2="634" stroke="#bfbfbf" stroke-width="1"/><line x1="72.5" y1="441.5" x2="72.5" y2="634" stroke="#bfbfbf" stroke-width="1"/><circle cx="216.4" cy="570.8" r="4" fill="#1c587a"/><circle cx="275.2" cy="537.8" r="4" fill="#1c587a"/><circle cx="360.3" cy="496.5" r="4" fill="#1c587a"/><circle cx="432.2" cy="458.0" r="4" fill="#1c587a"/><circle cx="504.1" cy="540.5" r="4" fill="#1c587a"/><circle cx="301.4" cy="606.5" r="4" fill="#1c587a"/><circle cx="137.9" cy="628.5" r="4" fill="#1c587a"/><text x="295" y="419" font-size="16" fill="#595959" text-anchor="middle" font-family="Liberation Sans" textLength="114" lengthAdjust="spacing">Icecream Sales</text><circle cx="259" cy="676.5" r="4" fill="#1c587a"/><text x="265.5" y="680.3" font-size="10.5" fill="#595959" font-family="Liberation Sans" textLength="73" lengthAdjust="spacing">Icecream Sales</text></svg>
<svg class="a" style="left:716px;top:277px" width="511" height="303" viewBox="716 277 511 303"><rect x="716.5" y="277.5" width="510" height="302" fill="#fff" stroke="#d9d9d9"/><line x1="753.3" y1="326.3" x2="753.3" y2="518.4" stroke="#d9d9d9" stroke-width="1"/><text x="753.3" y="538.4" font-size="10.3" fill="#595959" text-anchor="middle" font-family="Liberation Sans">0</text><line x1="828.8333333333333" y1="326.3" x2="828.8333333333333" y2="518.4" stroke="#d9d9d9" stroke-width="1"/><text x="828.8333333333333" y="538.4" font-size="10.3" fill="#595959" text-anchor="middle" font-family="Liberation Sans">10</text><line x1="904.3666666666667" y1="326.3" x2="904.3666666666667" y2="518.4" stroke="#d9d9d9" stroke-width="1"/><text x="904.3666666666667" y="538.4" font-size="10.3" fill="#595959" text-anchor="middle" font-family="Liberation Sans">20</text><line x1="979.9" y1="326.3" x2="979.9" y2="518.4" stroke="#d9d9d9" stroke-width="1"/><text x="979.9" y="538.4" font-size="10.3" fill="#595959" text-anchor="middle" font-family="Liberation Sans">30</text><line x1="1055.4333333333334" y1="326.3" x2="1055.4333333333334" y2="518.4" stroke="#d9d9d9" stroke-width="1"/><text x="1055.4333333333334" y="538.4" font-size="10.3" fill="#595959" text-anchor="middle" font-family="Liberation Sans">40</text><line x1="1130.9666666666667" y1="326.3" x2="1130.9666666666667" y2="518.4" stroke="#d9d9d9" stroke-width="1"/><text x="1130.9666666666667" y="538.4" font-size="10.3" fill="#595959" text-anchor="middle" font-family="Liberation Sans">50</text><line x1="1206.5" y1="326.3" x2="1206.5" y2="518.4" stroke="#d9d9d9" stroke-width="1"/><text x="1206.5" y="538.4" font-size="10.3" fill="#595959" text-anchor="middle" font-family="Liberation Sans">60</text><line x1="753.3" y1="518.4" x2="1206.5" y2="518.4" stroke="#d9d9d9" stroke-width="1"/><text x="742.3" y="522.1" font-size="10.3" fill="#595959" text-anchor="end" font-family="Liberation Sans">0</text><line x1="753.3" y1="486.3833333333333" x2="1206.5" y2="486.3833333333333" stroke="#d9d9d9" stroke-width="1"/><text x="742.3" y="490.0833333333333" font-size="10.3" fill="#595959" text-anchor="end" font-family="Liberation Sans">50</text><line x1="753.3" y1="454.3666666666667" x2="1206.5" y2="454.3666666666667" stroke="#d9d9d9" stroke-width="1"/><text x="742.3" y="458.06666666666666" font-size="10.3" fill="#595959" text-anchor="end" font-family="Liberation Sans">100</text><line x1="753.3" y1="422.34999999999997" x2="1206.5" y2="422.34999999999997" stroke="#d9d9d9" stroke-width="1"/><text x="742.3" y="426.04999999999995" font-size="10.3" fill="#595959" text-anchor="end" font-family="Liberation Sans">150</text><line x1="753.3" y1="390.33333333333337" x2="1206.5" y2="390.33333333333337" stroke="#d9d9d9" stroke-width="1"/><text x="742.3" y="394.03333333333336" font-size="10.3" fill="#595959" text-anchor="end" font-family="Liberation Sans">200</text><line x1="753.3" y1="358.3166666666667" x2="1206.5" y2="358.3166666666667" stroke="#d9d9d9" stroke-width="1"/><text x="742.3" y="362.0166666666667" font-size="10.3" fill="#595959" text-anchor="end" font-family="Liberation Sans">250</text><line x1="753.3" y1="326.29999999999995" x2="1206.5" y2="326.29999999999995" stroke="#d9d9d9" stroke-width="1"/><text x="742.3" y="329.99999999999994" font-size="10.3" fill="#595959" text-anchor="end" font-family="Liberation Sans">300</text><line x1="753.3" y1="518.4" x2="1206.5" y2="518.4" stroke="#bfbfbf" stroke-width="1"/><line x1="753.3" y1="326.3" x2="753.3" y2="518.4" stroke="#bfbfbf" stroke-width="1"/><circle cx="904.4" cy="499.2" r="4" fill="#1c587a"/><circle cx="979.9" cy="496.0" r="4" fill="#1c587a"/><circle cx="927.0" cy="512.0" r="4" fill="#1c587a"/><circle cx="1093.2" cy="469.1" r="4" fill="#1c587a"/><circle cx="942.1" cy="509.4" r="4" fill="#1c587a"/><circle cx="1017.7" cy="475.5" r="4" fill="#1c587a"/><circle cx="1131.0" cy="441.6" r="4" fill="#1c587a"/><circle cx="1085.6" cy="426.2" r="4" fill="#1c587a"/><circle cx="1040.3" cy="460.8" r="4" fill="#1c587a"/><circle cx="874.2" cy="507.5" r="4" fill="#1c587a"/><circle cx="1093.2" cy="462.1" r="4" fill="#1c587a"/><circle cx="1108.3" cy="475.5" r="4" fill="#1c587a"/><circle cx="1100.8" cy="462.1" r="4" fill="#1c587a"/><circle cx="1138.5" cy="364.7" r="4" fill="#1c587a"/><text x="971" y="304" font-size="16" fill="#595959" text-anchor="middle" font-family="Liberation Sans">Juise Sales</text><circle cx="946" cy="560.5" r="4" fill="#1c587a"/><text x="952.5" y="564.3" font-size="10.5" fill="#595959" font-family="Liberation Sans" textLength="51" lengthAdjust="spacing">Juise Sales</text></svg>
<div class="a" style="left:535px;top:204px;width:22px;height:22px;border-radius:50%;background:#fff;border:2px solid #2a6244;box-shadow:0 0 0 1.2px #fff"></div>
<div class="a" style="left:684px;top:505px;width:22px;height:22px;border-radius:50%;background:#fff;border:2px solid #2a6244;box-shadow:0 0 0 1.2px #fff"></div>
<div class="a" style="left:0;top:762px;width:1280px;height:38px;background:#f2f2f2;border-top:1px solid #dcdcdc"></div>
<svg class="a" style="left:0;top:762px" width="46" height="38" viewBox="0 762 46 38"><path d="M21.8 775.5 V788 M14.8 781.8 H28.8" stroke="#3a3a3a" stroke-width="2.8"/></svg>
<div class="a" style="left:46px;top:763px;width:2px;height:37px;background:#e4e4e4"></div>
<div class="a" style="left:133px;top:763px;width:2px;height:37px;background:#e4e4e4"></div>
<div class="t" style="left:48px;top:774px;font-size:15.7px;color:#4a4a4a">ne chart</div>
<div class="a" style="left:257px;top:763px;width:2px;height:37px;background:#e4e4e4"></div>
<div class="t" style="left:133px;width:124px;text-align:center;top:774px;font-size:15.7px;color:#4a4a4a">Pie chart</div>
<div class="a" style="left:385px;top:763px;width:2px;height:37px;background:#e4e4e4"></div>
<div class="t" style="left:257px;width:128px;text-align:center;top:774px;font-size:15.7px;color:#4a4a4a">Sun burst</div>
<div class="a" style="left:385px;top:762px;width:138px;height:38px;background:#fff"></div>
<div class="a" style="left:523px;top:763px;width:2px;height:37px;background:#e4e4e4"></div>
<div class="t" style="left:385px;width:138px;text-align:center;top:774px;font-size:15.7px;color:#222">Scatter plot</div>
<div class="a" style="left:687px;top:763px;width:2px;height:37px;background:#e4e4e4"></div>
<div class="t" style="left:523px;width:164px;text-align:center;top:774px;font-size:15.7px;color:#4a4a4a">Waterfall chart</div>
<div class="a" style="left:820px;top:763px;width:2px;height:37px;background:#e4e4e4"></div>
<div class="t" style="left:687px;width:133px;text-align:center;top:774px;font-size:15.7px;color:#4a4a4a">Histogram</div>
<div class="a" style="left:945px;top:763px;width:2px;height:37px;background:#e4e4e4"></div>
<div class="t" style="left:820px;width:125px;text-align:center;top:774px;font-size:15.7px;color:#4a4a4a">Tree map</div>
<div class="a" style="left:1092px;top:763px;width:2px;height:37px;background:#e4e4e4"></div>
<div class="t" style="left:945px;width:147px;text-align:center;top:774px;font-size:15.7px;color:#4a4a4a">Funnel chart</div>
<div class="a" style="left:1184px;top:770px;width:90px;height:25px;background:#fff;border:1px solid #cfcfcf"></div>
<div class="t" style="left:1190px;top:776px;font-size:13px;color:#333">SUM</div>
<div class="t" style="left:1234px;top:774px;font-size:15.6px;color:#333;-webkit-text-stroke:0.45px #333">1602</div>
<svg class="a" style="left:540px;top:700px;opacity:0.115" width="200" height="90" viewBox="540 700 200 90"><g fill="none" stroke="#000" stroke-width="5.8" stroke-linecap="round"><circle cx="575.3" cy="743.5" r="8.8"/><path d="M588.9 717.5 V749.5"/><path d="M580 749.7 H706"/><circle cx="615" cy="740.3" r="9.3"/><path d="M642 739 V749 M667.2 736.5 V749 M678.5 736.5 V749"/><circle cx="706.2" cy="742.8" r="7.8"/></g><g fill="#000"><circle cx="608.8" cy="717.6" r="3.8"/><circle cx="620" cy="717.6" r="3.8"/><circle cx="636" cy="726.2" r="3.8"/><circle cx="646.6" cy="726.2" r="3.8"/></g><text x="640" y="777.5" font-size="22" fill="#000" stroke="#000" stroke-width="0.8" text-anchor="middle" font-family="Liberation Sans" textLength="153" lengthAdjust="spacingAndGlyphs">mostaql.com</text></svg>
</body></html>
